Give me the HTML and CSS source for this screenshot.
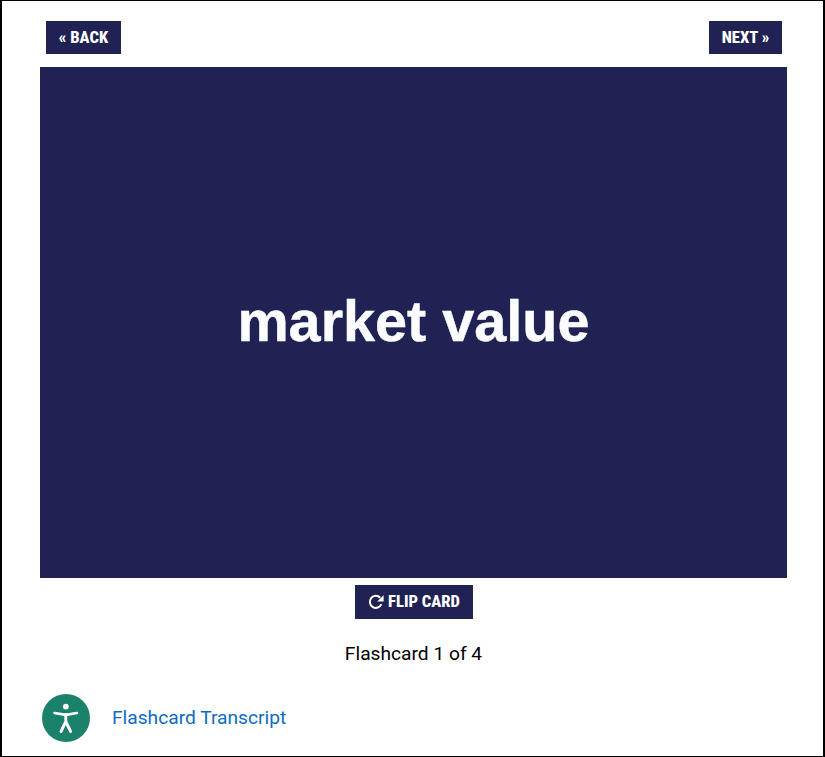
FILE: index.html
```html
<!DOCTYPE html>
<html lang="en">
<head>
<meta charset="utf-8">
<title>Flashcards</title>
<link rel="stylesheet" href="styles.css">
</head>
<body>
<main class="frame">
  <nav class="nav">
    <button class="btn btn-back" type="button">« BACK</button>
    <button class="btn btn-next" type="button">NEXT »</button>
  </nav>
  <section class="card"><h1 class="term">market value</h1></section>
  <div class="flip-row">
    <button class="btn btn-flip" type="button">
      <svg class="flip-icon" viewBox="0 0 16 16" width="16" height="16" aria-hidden="true"><path d="M13.4 10.2A6 6 0 1 1 12.2 3.7" fill="none" stroke="#fff" stroke-width="2"/><path d="M15.6 1.2V7.6H9.2z" fill="#fff"/></svg>
      FLIP CARD
    </button>
  </div>
  <p class="count">Flashcard 1 of 4</p>
  <div class="transcript"><a class="link" href="#">Flashcard Transcript</a></div>
  <div class="a11y" aria-label="Accessibility">
    <svg viewBox="0 0 48 48" width="48" height="48" aria-hidden="true">
      <circle cx="23.8" cy="12.6" r="2.9" fill="#fff"/>
      <path d="M12.5 19 L23.8 20.8 L35 19" fill="none" stroke="#fff" stroke-width="2.7" stroke-linecap="round" stroke-linejoin="round"/>
      <path d="M23.8 20.5 V27.5 M23.8 27.5 L19 37.5 M23.8 27.5 L28.6 37.5" fill="none" stroke="#fff" stroke-width="2.9" stroke-linecap="round" stroke-linejoin="round"/>
    </svg>
  </div>
</main>
</body>
</html>
```
FILE: styles.css
```css
* { box-sizing: border-box; }
html, body { margin: 0; padding: 0; background: #fff; }
.frame {
  position: relative;
  width: 825px;
  height: 757px;
  border: 1px solid #000;
  border-left-width: 2px;
  border-right-width: 2px;
  padding: 20px 36px 0 38px;
  overflow: hidden;
}
.nav {
  display: flex;
  justify-content: space-between;
  padding: 0 5px 0 6px;
  height: 33px;
}
.btn {
  display: inline-flex;
  align-items: center;
  justify-content: center;
  border: 0;
  margin: 0;
  padding: 1px 0 0;
  background: #202253;
  color: #fff;
  font-family: Roboto, "Liberation Sans", sans-serif;
  font-weight: 800;
  font-size: 16.6px;
  font-stretch: condensed;
  line-height: 32px;
}
.btn-back { width: 75px; height: 33px; }
.btn-next { width: 73px; height: 33px; }
.card {
  display: flex;
  align-items: center;
  justify-content: center;
  margin-top: 13px;
  width: 747px;
  height: 511px;
  background: #202253;
}
.term {
  margin: 0 0 2px;
  color: #fcfcfe;
  font-family: "Liberation Sans", Arial, sans-serif;
  font-weight: 700;
  font-size: 57.6px;
  line-height: 1;
  -webkit-text-stroke: 0.5px #fcfcfe;
}
.flip-row { display: flex; justify-content: center; margin-top: 7px; }
.btn-flip { width: 118px; height: 34px; gap: 4px; padding: 0 0 1px 1px; }
.count {
  margin: 24px 0 0;
  text-align: center;
  font-family: Roboto, "Liberation Sans", sans-serif;
  font-size: 19.2px;
  line-height: 21px;
  color: #000;
}
.transcript { margin: 42px 0 0 72px; line-height: 24px; }
.link {
  font-family: Roboto, "Liberation Sans", sans-serif;
  font-size: 19.2px;
  color: #0f6cbf;
  text-decoration: none;
}
.a11y {
  position: absolute;
  left: 40px;
  top: 693px;
  width: 48px;
  height: 48px;
  border-radius: 50%;
  background: #1a816a;
}
.a11y svg { display: block; }
```
